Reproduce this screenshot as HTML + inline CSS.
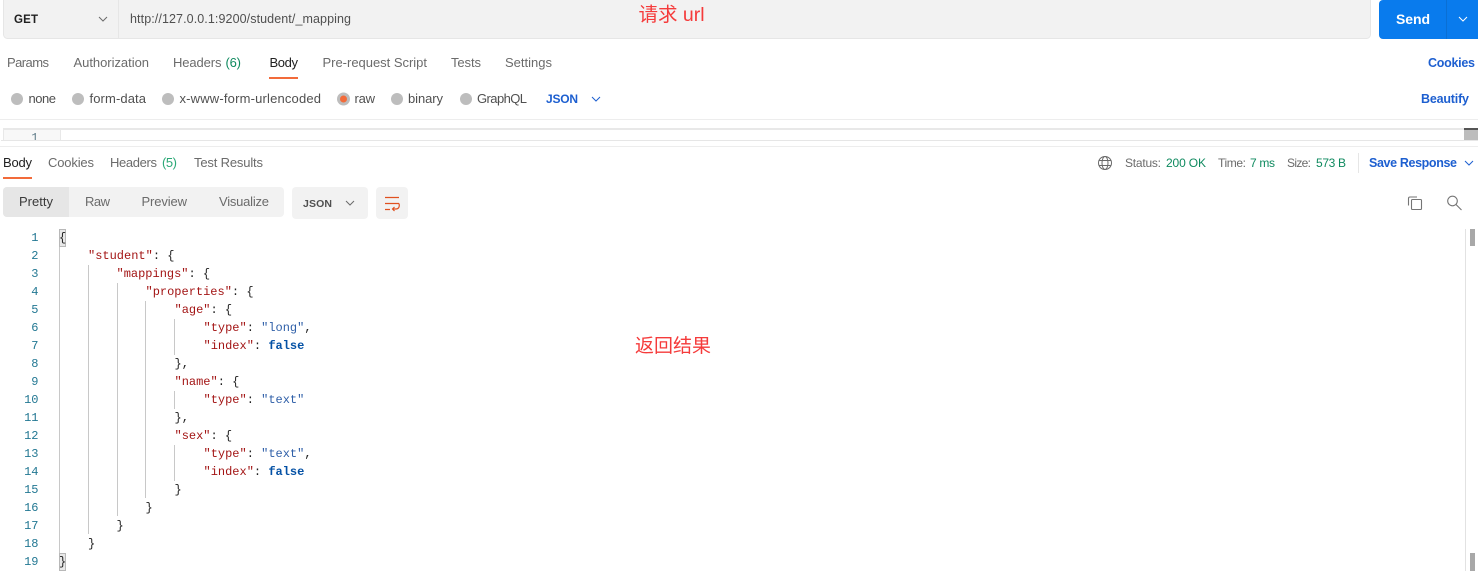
<!DOCTYPE html>
<html><head><meta charset="utf-8"><style>
html,body{margin:0;padding:0;background:#fff;width:1478px;height:571px;overflow:hidden}
svg{display:block}
text{font-family:"Liberation Sans","Noto Sans CJK SC",sans-serif;font-size:13px;fill:#6b6b6b;white-space:pre}
.d{fill:#212121}
.b{fill:#1d5fd0;font-size:12.5px}
.g{fill:#0f8a5f}
.s{font-size:12px}
.sb{font-weight:bold}
.red{fill:#f53b3b}
.c text,text.c{font-family:"Liberation Mono",monospace;font-size:12px}
.n{fill:#237893;font-family:"Liberation Mono",monospace;font-size:12px;text-anchor:end}
.k{fill:#a31515}
.v{fill:#2f5fa8}
.p{fill:#222}
.f{fill:#0451a5;font-weight:bold}
.gd{stroke:#c8c8c8;stroke-width:1;fill:none}
.ch{fill:none;stroke-width:1;stroke:#6b6b6b}
</style></head><body>
<svg width="1478" height="571" viewBox="0 0 1478 571" xmlns="http://www.w3.org/2000/svg">
<!-- URL bar -->
<rect x="3.5" y="-4" width="1367" height="42.5" rx="4" fill="#f2f2f2" stroke="#e6e6e6"/>
<line x1="118.5" y1="0" x2="118.5" y2="38" stroke="#e6e6e6"/>
<text x="14" y="23" class="d sb" style="font-size:11.500px" textLength="24" lengthAdjust="spacing">GET</text>
<path class="ch" d="M99 17l4 4 4-4"/>
<text x="130" y="23" style="fill:#505050;font-size:12.500px" textLength="221" lengthAdjust="spacing">http://127.0.0.1:9200/student/_mapping</text>
<text x="638.500" y="21" class="red" style="font-size:19.500px">请求 url</text>
<!-- Send -->
<path d="M1383 0H1478V39H1383a4 4 0 0 1-4-4V4a4 4 0 0 1 4-4z" fill="#097bed"/>
<line x1="1446.5" y1="0" x2="1446.5" y2="39" stroke="#0a6fd4"/>
<text x="1396" y="24" style="fill:#fff;font-size:14px;font-weight:bold" textLength="34" lengthAdjust="spacing">Send</text>
<path d="M1459 17l4 4 4-4" fill="none" stroke="#fff"/>
<!-- Request tabs -->
<text x="7" y="67" textLength="42" lengthAdjust="spacing">Params</text>
<text x="73.5" y="67" textLength="75.5" lengthAdjust="spacing">Authorization</text>
<text x="173" y="67" textLength="48.5" lengthAdjust="spacing">Headers</text>
<text x="225.5" y="67" class="g" textLength="15.5" lengthAdjust="spacing">(6)</text>
<text x="269.5" y="67" class="d" textLength="28.5" lengthAdjust="spacing">Body</text>
<rect x="269" y="77" width="29" height="2" fill="#f26b3a"/>
<text x="322.5" y="67" textLength="104.5" lengthAdjust="spacing">Pre-request Script</text>
<text x="451" y="67" textLength="30" lengthAdjust="spacing">Tests</text>
<text x="505" y="67" textLength="47" lengthAdjust="spacing">Settings</text>
<text x="1428" y="67" class="b sb" textLength="47" lengthAdjust="spacing">Cookies</text>
<!-- Radios -->
<g fill="#bdbdbd">
<circle cx="17" cy="99" r="6"/><circle cx="78" cy="99" r="6"/><circle cx="168" cy="99" r="6"/><circle cx="343.500" cy="99" r="6.500"/><circle cx="397" cy="99" r="6"/><circle cx="466" cy="99" r="6"/>
</g>
<circle cx="343.500" cy="99" r="3.500" fill="#f26b3a"/>
<text x="28.500" y="103" textLength="27.500" lengthAdjust="spacing" style="fill:#505050">none</text>
<text x="89.500" y="103" textLength="56.500" lengthAdjust="spacing" style="fill:#505050">form-data</text>
<text x="179.500" y="103" textLength="141.500" lengthAdjust="spacing" style="fill:#505050">x-www-form-urlencoded</text>
<text x="354.500" y="103" textLength="20.500" lengthAdjust="spacing" style="fill:#505050">raw</text>
<text x="408" y="103" textLength="35" lengthAdjust="spacing" style="fill:#505050">binary</text>
<text x="477" y="103" textLength="50" lengthAdjust="spacing" style="fill:#505050">GraphQL</text>
<text x="546" y="103" class="b sb" style="font-size:12px" textLength="32" lengthAdjust="spacing">JSON</text>
<path d="M592 97l4 4 4-4" fill="none" stroke="#1d5fd0"/>
<text x="1421" y="103" class="b sb" textLength="48" lengthAdjust="spacing">Beautify</text>
<line x1="0" y1="119.500" x2="1478" y2="119.500" stroke="#ededed"/>
<!-- Request editor strip -->
<rect x="3" y="128" width="1475" height="2" fill="#e8e8e8"/>
<rect x="3" y="130" width="57" height="10" fill="#f8f8f8"/>
<line x1="3.500" y1="128" x2="3.500" y2="140" stroke="#e8e8e8"/>
<rect x="60" y="130" width="1" height="10" fill="#e8e8e8"/>
<svg x="0" y="130" width="60" height="10" viewBox="0 130 60 10"><text class="n" x="38.500" y="141" style="fill:#5f7d8a">1</text></svg>
<rect x="1" y="140" width="1477" height="1" fill="#e6e6e6"/>
<rect x="1464" y="128" width="14" height="2" fill="#555"/>
<rect x="1464" y="130" width="14" height="10" fill="#bdbdbd"/>
<line x1="0" y1="146.500" x2="1478" y2="146.500" stroke="#ededed"/>
<!-- Response tabs -->
<text x="3" y="167" class="d" textLength="29" lengthAdjust="spacing">Body</text>
<rect x="3" y="177" width="29" height="2" fill="#f26b3a"/>
<text x="48" y="167" textLength="46" lengthAdjust="spacing">Cookies</text>
<text x="110" y="167" textLength="47" lengthAdjust="spacing">Headers</text>
<text x="162" y="167" class="g" textLength="15" lengthAdjust="spacing" style="fill:#2aa876">(5)</text>
<text x="194" y="167" textLength="69" lengthAdjust="spacing">Test Results</text>
<!-- Status -->
<g fill="none" stroke="#6b6b6b" stroke-width="1">
<circle cx="1105" cy="163" r="6.500"/><ellipse cx="1105" cy="163" rx="3" ry="6.500"/>
<path d="M1099 160.500h12M1099 165.500h12"/>
</g>
<text x="1125" y="167" class="s" textLength="36" lengthAdjust="spacing">Status:</text>
<text x="1166" y="167" class="g s" textLength="40" lengthAdjust="spacing">200 OK</text>
<text x="1218" y="167" class="s" textLength="28" lengthAdjust="spacing">Time:</text>
<text x="1250" y="167" class="g s" textLength="25" lengthAdjust="spacing">7 ms</text>
<text x="1287" y="167" class="s" textLength="24" lengthAdjust="spacing">Size:</text>
<text x="1316" y="167" class="g s" textLength="30" lengthAdjust="spacing">573 B</text>
<line x1="1358.500" y1="153" x2="1358.500" y2="173" stroke="#e6e6e6"/>
<text x="1369" y="167" class="b sb" textLength="88" lengthAdjust="spacing">Save Response</text>
<path d="M1465 161l4 4 4-4" fill="none" stroke="#1d5fd0"/>
<!-- Toolbar -->
<rect x="3" y="187" width="281" height="30" rx="4" fill="#f2f2f2"/>
<path d="M7 187H69V217H7a4 4 0 0 1-4-4V191a4 4 0 0 1 4-4z" fill="#e6e6e6"/>
<text x="19" y="206" class="d" style="fill:#3a3a3a" textLength="34" lengthAdjust="spacing">Pretty</text>
<text x="85" y="206" textLength="25" lengthAdjust="spacing">Raw</text>
<text x="141.500" y="206" textLength="45.500" lengthAdjust="spacing">Preview</text>
<text x="219" y="206" textLength="50" lengthAdjust="spacing">Visualize</text>
<rect x="292" y="187" width="76" height="32" rx="4" fill="#f2f2f2"/>
<text x="303" y="207" class="sb" style="fill:#505050;font-size:10.500px" textLength="29" lengthAdjust="spacing">JSON</text>
<path class="ch" d="M346 201l4 4 4-4"/>
<rect x="376" y="187" width="32" height="32" rx="4" fill="#f2f2f2"/>
<path d="M385 197.500h14M385 203.500h14M385 209.500h5" fill="none" stroke="#e0501f" stroke-width="1.200"/>
<path d="M399 203.500c1 4-1 5.500-3 5.500h-3.500M394.500 207l-2 2 2 2" fill="none" stroke="#e0501f" stroke-width="1.200"/>
<!-- Copy / search -->
<g fill="none" stroke="#757575" stroke-width="1.100">
<rect x="1411.500" y="199.500" width="10" height="10" rx="1"/>
<path d="M1408.500 205.500v-7a1.500 1.500 0 0 1 1.500-1.500h7"/>
<circle cx="1452.500" cy="201" r="4.800"/>
<path d="M1456 204.500l5.500 5.500"/>
</g>
<!-- Scrollbar -->
<line x1="1465.500" y1="229" x2="1465.500" y2="571" stroke="#e2e2e2"/>
<rect x="1470" y="229" width="5" height="17" fill="#a8a8a8"/>
<rect x="1470" y="553" width="5" height="18" fill="#a8a8a8"/>
<!-- Bracket highlight -->
<rect x="59.500" y="229.500" width="6" height="17" fill="#e8e8e8" stroke="#b8b8b8"/>
<rect x="59.500" y="553.500" width="6" height="17" fill="#e8e8e8" stroke="#b8b8b8"/>
<!-- Indent guides -->
<path class="gd" d="M59.500 247V553M88.500 265V534M117.500 283V516M145.500 301V498M174.500 319V355M174.500 391V409M174.500 445V481"/>
<g transform="translate(-0.5,-1)">
<!-- Line numbers -->
<text class="n" x="39" y="242">1</text><text class="n" x="39" y="260">2</text><text class="n" x="39" y="278">3</text><text class="n" x="39" y="296">4</text><text class="n" x="39" y="314">5</text><text class="n" x="39" y="332">6</text><text class="n" x="39" y="350">7</text><text class="n" x="39" y="368">8</text><text class="n" x="39" y="386">9</text><text class="n" x="39" y="404">10</text><text class="n" x="39" y="422">11</text><text class="n" x="39" y="440">12</text><text class="n" x="39" y="458">13</text><text class="n" x="39" y="476">14</text><text class="n" x="39" y="494">15</text><text class="n" x="39" y="512">16</text><text class="n" x="39" y="530">17</text><text class="n" x="39" y="548">18</text><text class="n" x="39" y="566">19</text>
<!-- Code -->
<g class="c">
<text x="59.500" y="242" class="p">{</text>
<text x="88.500" y="260"><tspan class="k">"student"</tspan><tspan class="p">: {</tspan></text>
<text x="117" y="278"><tspan class="k">"mappings"</tspan><tspan class="p">: {</tspan></text>
<text x="146" y="296"><tspan class="k">"properties"</tspan><tspan class="p">: {</tspan></text>
<text x="175" y="314"><tspan class="k">"age"</tspan><tspan class="p">: {</tspan></text>
<text x="204" y="332"><tspan class="k">"type"</tspan><tspan class="p">: </tspan><tspan class="v">"long"</tspan><tspan class="p">,</tspan></text>
<text x="204" y="350"><tspan class="k">"index"</tspan><tspan class="p">: </tspan><tspan class="f">false</tspan></text>
<text x="175" y="368" class="p">},</text>
<text x="175" y="386"><tspan class="k">"name"</tspan><tspan class="p">: {</tspan></text>
<text x="204" y="404"><tspan class="k">"type"</tspan><tspan class="p">: </tspan><tspan class="v">"text"</tspan></text>
<text x="175" y="422" class="p">},</text>
<text x="175" y="440"><tspan class="k">"sex"</tspan><tspan class="p">: {</tspan></text>
<text x="204" y="458"><tspan class="k">"type"</tspan><tspan class="p">: </tspan><tspan class="v">"text"</tspan><tspan class="p">,</tspan></text>
<text x="204" y="476"><tspan class="k">"index"</tspan><tspan class="p">: </tspan><tspan class="f">false</tspan></text>
<text x="175" y="494" class="p">}</text>
<text x="146" y="512" class="p">}</text>
<text x="117" y="530" class="p">}</text>
<text x="88.500" y="548" class="p">}</text>
<text x="59.500" y="566" class="p">}</text>
</g>
</g>
<text x="635" y="352" class="red" style="font-size:19px">返回结果</text>
</svg>
</body></html>
